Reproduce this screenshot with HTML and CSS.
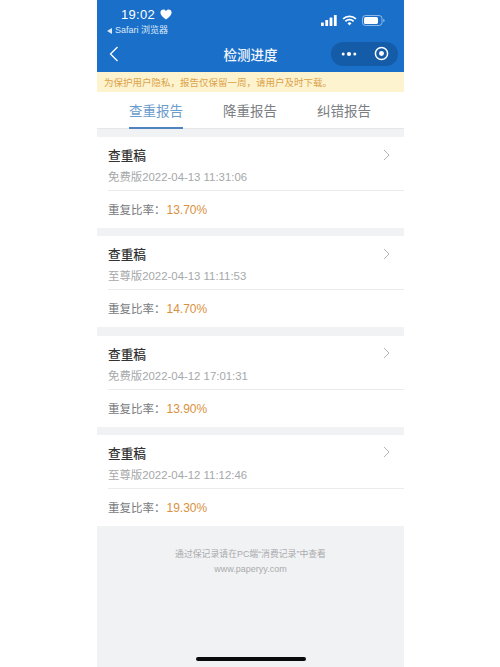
FILE: index.html
```html
<!DOCTYPE html>
<html lang="zh">
<head>
<meta charset="utf-8">
<title>检测进度</title>
<link rel="stylesheet" href="styles.css">
</head>
<body>
<div class="phone">
  <header class="top">
    <div class="status">
      <div class="status-left">
        <div class="time">19:02 <svg class="heart" viewBox="0 0 12 11" width="12" height="11"><path d="M6 10.600C2.600 8 .4 6 .4 3.500.4 1.600 1.800.4 3.300.4 4.500.4 5.500 1 6 2c.5-1 1.500-1.600 2.700-1.600 1.500 0 2.900 1.200 2.900 3.100C11.600 6 9.400 8 6 10.600z" fill="#fff"/></svg></div>
        <div class="back-app"><span class="tri"></span>Safari 浏览器</div>
      </div>
      <div class="status-right">
        <svg viewBox="0 0 16 11" width="16" height="11"><g fill="#fff"><rect x="0" y="7.500" width="2.800" height="3.500" rx=".6"/><rect x="4.300" y="5" width="2.800" height="6" rx=".6"/><rect x="8.600" y="2.500" width="2.800" height="8.500" rx=".6"/><rect x="12.900" y="0" width="2.800" height="11" rx=".6"/></g></svg>
        <svg viewBox="0 0 16 12" width="15" height="11"><g fill="none" stroke="#fff" stroke-width="1.900"><path d="M1 4.300a10 10 0 0 1 14 0"/><path d="M3.500 6.900a6.400 6.400 0 0 1 9 0"/></g><path d="M8 11.500 5.800 9.100a3.100 3.100 0 0 1 4.400 0z" fill="#fff"/></svg>
        <svg viewBox="0 0 23 11" width="23" height="11"><rect x=".5" y=".5" width="19.500" height="10" rx="3" fill="none" stroke="#fff" stroke-opacity=".5"/><rect x="2" y="2" width="14" height="7" rx="1.600" fill="#fff"/><path d="M21.300 3.800c.9.300 1.300 1 1.300 1.700s-.4 1.400-1.300 1.700z" fill="#fff" fill-opacity=".55"/></svg>
      </div>
    </div>
    <div class="nav">
      <svg class="chev" viewBox="0 0 10 16" width="10" height="16"><path d="M8.500 1 1.500 8l7 7" fill="none" stroke="#fff" stroke-width="1.300"/></svg>
      <div class="title">检测进度</div>
      <div class="capsule">
        <svg viewBox="0 0 16 6" width="16" height="6"><g fill="#fff"><circle cx="2.200" cy="3" r="1.500"/><circle cx="8" cy="3" r="2.100"/><circle cx="13.800" cy="3" r="1.500"/></g></svg>
        <svg viewBox="0 0 16 16" width="15" height="15"><circle cx="8" cy="8" r="6.500" fill="none" stroke="#fff" stroke-width="1.600"/><circle cx="8" cy="8" r="2.600" fill="#fff"/></svg>
      </div>
    </div>
  </header>
  <div class="notice">为保护用户隐私，报告仅保留一周，请用户及时下载。</div>
  <nav class="tabs">
    <div class="tab active">查重报告</div>
    <div class="tab">降重报告</div>
    <div class="tab">纠错报告</div>
  </nav>
  <main class="list">
    <section class="card">
      <div class="card-head">
        <div class="name">查重稿</div>
        <svg class="arrow" viewBox="0 0 7 12" width="7" height="12"><path d="M1 1l5 5-5 5" fill="none" stroke="#b5b5b5"/></svg>
      </div>
      <div class="meta">免费版2022-04-13 11:31:06</div>
      <div class="rate">重复比率：<span class="pct">13.70%</span></div>
    </section>
    <section class="card">
      <div class="card-head">
        <div class="name">查重稿</div>
        <svg class="arrow" viewBox="0 0 7 12" width="7" height="12"><path d="M1 1l5 5-5 5" fill="none" stroke="#b5b5b5"/></svg>
      </div>
      <div class="meta">至尊版2022-04-13 11:11:53</div>
      <div class="rate">重复比率：<span class="pct">14.70%</span></div>
    </section>
    <section class="card">
      <div class="card-head">
        <div class="name">查重稿</div>
        <svg class="arrow" viewBox="0 0 7 12" width="7" height="12"><path d="M1 1l5 5-5 5" fill="none" stroke="#b5b5b5"/></svg>
      </div>
      <div class="meta">免费版2022-04-12 17:01:31</div>
      <div class="rate">重复比率：<span class="pct">13.90%</span></div>
    </section>
    <section class="card">
      <div class="card-head">
        <div class="name">查重稿</div>
        <svg class="arrow" viewBox="0 0 7 12" width="7" height="12"><path d="M1 1l5 5-5 5" fill="none" stroke="#b5b5b5"/></svg>
      </div>
      <div class="meta">至尊版2022-04-12 11:12:46</div>
      <div class="rate">重复比率：<span class="pct">19.30%</span></div>
    </section>
  </main>
  <footer class="foot">
    <div>通过保记录请在PC端“消费记录”中查看</div>
    <div class="url">www.paperyy.com</div>
    <div class="home-bar"></div>
  </footer>
</div>
</body>
</html>
```
FILE: styles.css
```css
* { box-sizing: border-box; }
html, body { margin: 0; padding: 0; background: #fff; }
body {
  display: flex;
  justify-content: center;
  height: 667px;
  overflow: hidden;
  font-family: "Liberation Sans", "Noto Sans CJK SC", sans-serif;
}
.phone {
  width: 307px;
  height: 667px;
  margin-left: 1px;
  display: flex;
  flex-direction: column;
  background: #f1f2f4;
}
.top { height: 72px; background: #1a6fc9; color: #fff; }
.status {
  height: 37px;
  display: flex;
  justify-content: space-between;
  padding: 7px 19px 0 10px;
}
.time {
  font-size: 13px;
  line-height: 15px;
  margin-left: 14px;
  letter-spacing: .3px;
  display: flex;
  align-items: center;
  gap: 5px;
}
.back-app {
  font-size: 9px;
  line-height: 13px;
  margin-top: 2px;
  display: flex;
  align-items: center;
  gap: 3px;
  color: #dce9f7;
}
.tri {
  width: 0;
  height: 0;
  border-style: solid;
  border-width: 3px 5px 3px 0;
  border-color: transparent #dce9f7 transparent transparent;
}
.status-right {
  display: flex;
  align-items: center;
  gap: 5px;
  height: 26px;
}
.nav {
  height: 35px;
  display: flex;
  align-items: center;
  position: relative;
  padding: 0 6px 0 12px;
  justify-content: space-between;
}
.title {
  position: absolute;
  left: 0;
  right: 0;
  text-align: center;
  font-size: 13.500px;
  font-weight: 500;
  color: #f2f7fc;
  margin-top: -2px;
}
.chev { margin-top: -2px; }
.capsule {
  position: relative;
  width: 67px;
  height: 24px;
  margin-top: -2px;
  border-radius: 12px;
  background: #155ca8;
  display: flex;
  align-items: center;
  justify-content: space-between;
  padding: 0 9px 0 10px;
}
.notice {
  height: 20px;
  background: #fdf3ce;
  color: #dca24a;
  font-size: 9.500px;
  line-height: 21px;
  padding-left: 7px;
  white-space: nowrap;
}
.tabs {
  height: 37px;
  background: #fff;
  display: flex;
  justify-content: space-between;
  padding: 0 33px 0 32px;
  border-bottom: 1px solid #e6e7e9;
}
.tab {
  width: 54px;
  font-size: 13.500px;
  line-height: 39px;
  color: #7b7e82;
  white-space: nowrap;
  height: 37px;
}
.active {
  color: #6a9ccc;
  border-bottom: 2px solid #4e83bd;
}
.list {
  padding-top: 8px;
  display: flex;
  flex-direction: column;
  gap: 8.300px;
}
.card {
  height: 91px;
  background: #fff;
  padding-left: 11px;
}
.card-head {
  display: flex;
  justify-content: space-between;
  align-items: center;
  height: 30px;
  padding: 5px 14px 0 0;
}
.name { font-size: 12.700px; color: #333; font-weight: 500; }
.meta {
  height: 24px;
  font-size: 11.400px;
  line-height: 20px;
  color: #a6a8aa;
  border-bottom: 1px solid #ececec;
}
.rate {
  height: 37px;
  font-size: 11.500px;
  line-height: 39px;
  color: #77797c;
}
.pct { color: #d9913d; font-size: 12px; margin-left: 1px; }
.foot {
  flex: 1;
  position: relative;
  text-align: center;
  color: #a9abad;
  font-size: 8.850px;
  line-height: 14px;
  padding-top: 21px;
}
.url { font-size: 9px; margin-top: 1px; }
.home-bar {
  position: absolute;
  left: 99px;
  bottom: 6px;
  width: 110px;
  height: 4px;
  border-radius: 2px;
  background: #0a0a0a;
}
```
